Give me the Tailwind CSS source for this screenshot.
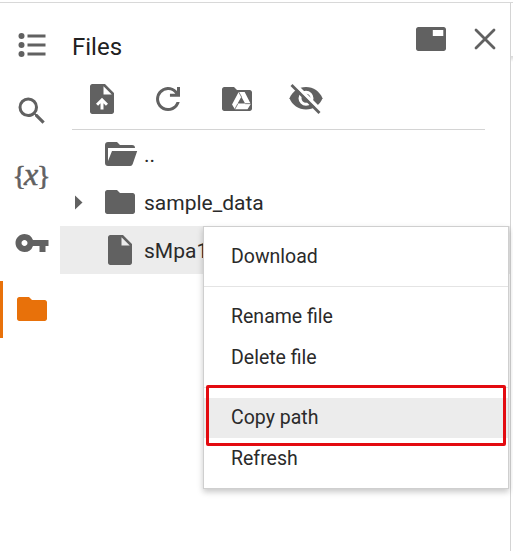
<!DOCTYPE html>
<html lang="en">
<head>
<meta charset="utf-8">
<title>Files</title>
<script src="https://cdn.jsdelivr.net/npm/@tailwindcss/browser@4"></script>
</head>
<body class="bg-white">
<div class="relative flex h-[551px] w-[513px] overflow-hidden bg-white pt-[2px] font-[Roboto,sans-serif] text-[#2a2a2a]">
  <div class="absolute inset-x-0 top-[2px] h-px bg-[#d8d8d8]"></div>

  <nav class="flex w-[60px] shrink-0 flex-col pt-[10px] text-[#616161]">
    <div class="flex h-[66px] items-center pl-[13.5px]">
      <svg class="size-9" viewBox="0 0 36 36" fill="currentColor"><circle cx="7.5" cy="9" r="3"/><circle cx="7.5" cy="18" r="3"/><circle cx="7.5" cy="27" r="3"/><path d="M13.500 7.500h18v3h-18zM13.500 16.500h18v3h-18zM13.500 25.500h18v3h-18z"/></svg>
    </div>
    <div class="flex h-[66px] items-center pl-[13.5px]">
      <svg class="size-9" viewBox="0 0 24 24" fill="currentColor"><path d="M15.500 14h-.79l-.28-.27A6.470 6.470 0 0 0 16 9.500 6.500 6.500 0 1 0 9.500 16c1.610 0 3.090-.59 4.230-1.570l.27.28v.79l5 4.990L20.490 19l-4.990-5zm-6 0A4.500 4.500 0 1 1 14 9.500 4.490 4.490 0 0 1 9.500 14z"/></svg>
    </div>
    <div class="flex h-[66px] w-[63px] items-center justify-center font-['Liberation_Serif',serif] text-[28px] leading-none whitespace-nowrap [-webkit-text-stroke:0.6px_#616161]">
      <span class="-mt-[3px] tracking-[-2px]">{</span><span class="-mt-[6px] text-[32px] tracking-[-1px] italic">x</span><span class="-mt-[3px]">}</span>
    </div>
    <div class="flex h-[66px] items-center pl-[13.5px]">
      <svg class="size-9" viewBox="0 0 24 24" fill="currentColor"><path d="M12.650 10A5.990 5.990 0 0 0 7 6c-3.310 0-6 2.690-6 6s2.690 6 6 6a5.990 5.990 0 0 0 5.650-4H17v4h4v-4h2v-4H12.650zM7 14c-1.100 0-2-.9-2-2s.9-2 2-2 2 .9 2 2-.9 2-2 2z"/></svg>
    </div>
    <div class="mt-[5px] flex h-[57px] items-center border-l-[3px] border-[#e8710a] pb-px pl-[10.5px] text-[#e8710a]">
      <svg class="size-9" viewBox="0 0 24 24" fill="currentColor"><path d="M10 4H3.500C2.700 4 2 4.700 2 5.500v13c0 .8.700 1.500 1.500 1.500h17c.8 0 1.500-.7 1.500-1.500v-11C22 6.700 21.300 6 20.500 6H12z"/></svg>
    </div>
  </nav>

  <main class="w-[451px] shrink-0 border-r border-[#d4d4d4]">
    <header class="flex h-[68px] pl-[12px]">
      <h1 class="mt-[27px] flex-1 text-[24px] leading-[36px] text-[#212121]">Files</h1>
      <svg class="mt-[19px] size-9 text-[#616161]" viewBox="0 0 24 24" fill="currentColor"><path d="M20.500 4h-17C2.700 4 2 4.700 2 5.500v13c0 .8.700 1.500 1.500 1.500h17c.8 0 1.500-.7 1.500-1.500v-13c0-.8-.7-1.500-1.500-1.500zM20.200 10h-7V6h7z"/></svg>
      <svg class="mt-[19px] mr-[7.500px] ml-[18px] size-9" viewBox="0 0 36 36" fill="none" stroke="#616161" stroke-width="2.800" stroke-linecap="round"><path d="M9 9l18 18M27 9L9 27"/></svg>
    </header>
    <div class="ml-[12px] flex h-[60px] w-[413px] items-center gap-[30px] border-b border-[#d4d4d4] pb-px pl-[12px] text-[#616161]">
      <svg class="size-9" viewBox="0 0 24 24" fill="currentColor"><path fill-rule="evenodd" d="M14 2H5.500C4.700 2 4 2.700 4 3.500v17c0 .8.700 1.500 1.500 1.500h13c.8 0 1.500-.7 1.500-1.500V8zM13 3.500V9h5.500zM8 15.100l1.400 1.400 1.600-1.600V19h2v-4.100l1.600 1.600 1.400-1.400-4-4z"/></svg>
      <svg class="size-9" viewBox="0 0 24 24" fill="currentColor"><path d="M18 4v2.700A8 8 0 1 0 19.800 14h-2.100A6 6 0 1 1 16.900 8.500H13.300v2H20V4z"/></svg>
      <svg class="ml-[3px] size-9" viewBox="0 0 24 24" fill="currentColor"><path d="M10 4H3.500C2.700 4 2 4.700 2 5.500v13c0 .8.700 1.500 1.500 1.500h17c.8 0 1.500-.7 1.500-1.500v-11C22 6.700 21.300 6 20.500 6H12z"/><path fill="#fff" fill-rule="evenodd" d="M13.100 7.400h4L21.200 15.300 19 18.800h-8.400L8.700 15.600zM14.900 10.500L12.400 15h5z"/><path fill="none" stroke="#616161" stroke-width=".55" d="M13.100 7.200l2 3.600M10.500 18.900l2-3.700M17.400 15.100h4"/></svg>
      <svg class="ml-[3px] size-9" viewBox="0 0 36 36"><path d="M1.500 17.200C4.200 10.600 10.600 6 18 6s13.800 4.600 16.500 11.200C31.800 24 25.400 28.500 18 28.500S4.200 24 1.500 17.200z" fill="#616161"/><circle cx="18" cy="17.200" r="6" fill="#616161" stroke="#fff" stroke-width="3"/><path d="M5 1.500L33.500 30" stroke="#fff" stroke-width="3.500"/><path d="M3.500 4L31.500 32" stroke="#616161" stroke-width="2.800"/></svg>
    </div>
    <div class="flex h-12 items-center pl-[42px] text-[21px]">
      <svg class="h-9 w-[42px] text-[#616161]" viewBox="0 0 42 36" fill="currentColor"><path d="M6 6h9l3 3h12c2 0 3 1 3 3H6v13l4-10h25.200l-4.500 13c-.5 1.300-1.200 2-2.500 2H6c-1.800 0-3-1.200-3-3V9c0-1.800 1.200-3 3-3z"/></svg>
      <span class="pt-[3px]">..</span>
    </div>
    <div class="flex h-12 items-center pl-[14px] text-[21px]">
      <svg class="mr-[19px] h-[15px] w-[9px] text-[#616161]" viewBox="0 0 9 15" fill="currentColor"><path d="M1 0.500l7.500 7L1 14.500z"/></svg>
      <svg class="mr-[6px] size-9 text-[#616161]" viewBox="0 0 24 24" fill="currentColor"><path d="M10 4H3.500C2.700 4 2 4.700 2 5.500v13c0 .8.700 1.500 1.500 1.500h17c.8 0 1.500-.7 1.500-1.500v-11C22 6.700 21.300 6 20.500 6H12z"/></svg>
      <span class="pt-[3px]">sample_data</span>
    </div>
    <div class="flex h-12 items-center bg-[#ececec] pl-[42px] text-[21px]">
      <svg class="mr-[6px] size-9 text-[#616161]" viewBox="0 0 24 24" fill="currentColor"><path fill-rule="evenodd" d="M14 2H5.500C4.700 2 4 2.700 4 3.500v17c0 .8.700 1.500 1.500 1.500h13c.8 0 1.500-.7 1.500-1.500V8zM13 3.500V9h5.500z"/></svg>
      <span class="pt-[3px]">sMpa1</span>
    </div>
  </main>
  <div class="mt-[54px] h-[6px] flex-1 bg-linear-to-b from-[#d8d8d8] to-white"></div>

  <div class="absolute top-[226px] left-[203px] flex h-[263px] w-[306px] flex-col border border-[#cfcfcf] bg-white py-[9px] text-[19.500px] shadow-[0_3px_6px_rgba(0,0,0,0.22)]">
    <div class="flex h-10 items-center pt-[2px] pl-[27px]">Download</div>
    <div class="my-[10px] h-px shrink-0 bg-[#e4e4e4]"></div>
    <div class="flex h-10 items-center pl-[27px]">Rename file</div>
    <div class="flex h-[41px] items-center pl-[27px]">Delete file</div>
    <div class="mt-[9px] mb-[10px] h-px shrink-0 bg-[#e4e4e4]"></div>
    <div class="flex h-10 items-center bg-[#ececec] pl-[27px]">Copy path</div>
    <div class="flex h-[41px] items-center pl-[27px]">Refresh</div>
  </div>
  <div class="absolute top-[385px] left-[206px] h-[61px] w-[300px] rounded-[2px] border-[3px] border-[#e30b10]"></div>
</div>
</body>
</html>
